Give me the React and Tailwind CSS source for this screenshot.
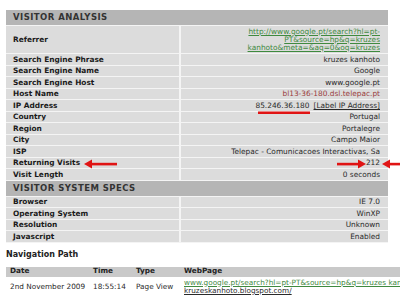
import React from "react";

const Row = ({ label, children, h = "h-[11.5px]", valueClass = "text-[#2a2a2a]" }) => (
  <div className={`flex ${h} border-b border-[#f4f4f4] bg-[#dcdcdc]`}>
    <div className="w-[173px] shrink-0 flex items-center pl-[7px] font-bold text-[7.4px] text-[#1a1a1a] whitespace-nowrap">
      {label}
    </div>
    <div className={`flex-1 flex items-center justify-end border-l-2 border-[#f4f4f4] pr-[8px] text-[7.4px] whitespace-nowrap ${valueClass}`}>
      {children}
    </div>
  </div>
);

const Header = ({ children }) => (
  <div className="h-[16px] flex items-center pl-[7px] bg-[#b5b5b5] border-b border-[#f4f4f4] font-bold text-[8.5px] tracking-[0.45px] text-[#333]">
    {children}
  </div>
);

export default function App() {
  return (
    <div className="relative w-[400px] h-[301px] overflow-hidden bg-white font-['DejaVu_Sans',sans-serif] text-[#2a2a2a]">
      <div className="pt-[10px] pl-[6px]">
        <div className="w-[382px]">
          <Header>VISITOR ANALYSIS</Header>
          <Row label="Referrer" h="h-[28px]">
            <div className="text-right leading-[8px] text-[#3f8a3f] underline">
              <div>http://www.google.pt/search?hl=pt-</div>
              <div>PT&amp;source=hp&amp;q=kruzes</div>
              <div>kanhoto&amp;meta=&amp;aq=0&amp;oq=kruzes</div>
            </div>
          </Row>
          <Row label="Search Engine Phrase">kruzes kanhoto</Row>
          <Row label="Search Engine Name">Google</Row>
          <Row label="Search Engine Host">www.google.pt</Row>
          <Row label="Host Name" valueClass="text-[#9a3c3c]">bl13-36-180.dsl.telepac.pt</Row>
          <Row label="IP Address">
            <span>85.246.36.180</span>
            <span className="ml-[4px] underline">[Label IP Address]</span>
          </Row>
          <Row label="Country">Portugal</Row>
          <Row label="Region">Portalegre</Row>
          <Row label="City">Campo Maior</Row>
          <Row label="ISP">Telepac - Comunicacoes Interactivas, Sa</Row>
          <Row label="Returning Visits">212</Row>
          <Row label="Visit Length">0 seconds</Row>
          <Header>VISITOR SYSTEM SPECS</Header>
          <Row label="Browser">IE 7.0</Row>
          <Row label="Operating System">WinXP</Row>
          <Row label="Resolution">Unknown</Row>
          <Row label="Javascript">Enabled</Row>
        </div>

        <div className="mt-[7px] leading-[10px] font-bold text-[8px] text-[#222]">Navigation Path</div>

        <div className="mt-[7px] w-[600px]">
          <div className="flex h-[10px] items-center bg-[#c9c9c9] font-bold text-[7.3px] text-[#222]">
            <div className="w-[83px] pl-[4px]">Date</div>
            <div className="w-[43px] pl-[4px]">Time</div>
            <div className="w-[48px] pl-[4px]">Type</div>
            <div className="pl-[4px]">WebPage</div>
          </div>
          <div className="flex pt-[2px] text-[7.3px] leading-[8px] whitespace-nowrap">
            <div className="w-[83px] pl-[4px] flex items-center">2nd November 2009</div>
            <div className="w-[43px] pl-[4px] flex items-center">18:55:14</div>
            <div className="w-[48px] pl-[4px] flex items-center">Page View</div>
            <div className="pl-[4px]">
              <div className="text-[#3f8a3f] underline">www.google.pt/search?hl=pt-PT&amp;source=hp&amp;q=kruzes kan</div>
              <div className="text-[#2a2a2a] underline">kruzeskanhoto.blogspot.com/</div>
            </div>
          </div>
        </div>
      </div>

      <svg className="absolute left-0 top-0 pointer-events-none" width="400" height="301" viewBox="0 0 400 301">
        <rect x="258" y="111.5" width="52" height="2.5" fill="#e01414" />
        <rect x="90" y="162.8" width="27" height="2.6" fill="#e01414" />
        <polygon points="84,164 92,159.5 92,168.5" fill="#e01414" />
        <rect x="337" y="162.8" width="23" height="2.6" fill="#e01414" />
        <polygon points="366,164 358,159.5 358,168.5" fill="#e01414" />
        <polygon points="382,164 390,159.5 390,168.5" fill="#e01414" />
        <rect x="388" y="162.8" width="12" height="2.6" fill="#e01414" />
      </svg>
    </div>
  );
}
